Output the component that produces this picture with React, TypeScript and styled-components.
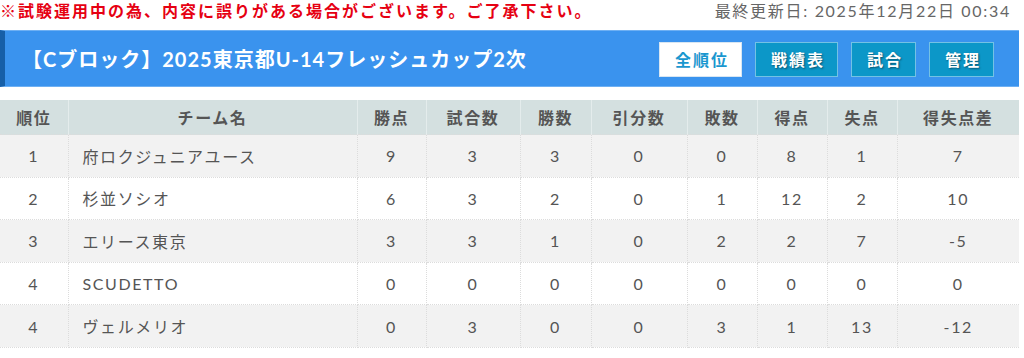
import styled, { createGlobalStyle } from "styled-components";

const GlobalStyle = createGlobalStyle`
  body {
    margin: 0;
    background: #ffffff;
    font-family: Lato, "Noto Sans CJK JP", sans-serif;
    letter-spacing: 0.1em;
  }
`;

const Page = styled.div`
  width: 1019px;
`;

const TopLine = styled.div`
  height: 30px;
  display: flex;
  justify-content: space-between;
  align-items: flex-start;
  padding-right: 8px;
`;

const Notice = styled.div`
  color: #e60012;
  font-size: 16px;
  font-weight: 700;
  line-height: 22px;
  letter-spacing: 2px;
`;

const Updated = styled.div`
  color: #666666;
  font-size: 16px;
  line-height: 22px;
  letter-spacing: 1.7px;
`;

const TitleBar = styled.div`
  height: 55px;
  background: #3a93ee;
  border-top: 1px solid #6eb0f3;
  border-bottom: 1px solid #6eb0f3;
  border-left: 5px solid #165fa8;
  display: flex;
  align-items: center;
  justify-content: space-between;
  padding: 0 25px 0 17px;
  margin-bottom: 13px;
`;

const Title = styled.h1`
  margin: 0;
  color: #ffffff;
  font-size: 20px;
  font-weight: 700;
  letter-spacing: 0.05em;
`;

const Nav = styled.div`
  display: flex;
  gap: 13px;
  padding-top: 1px;
`;

const NavButton = styled.a<{ $active?: boolean }>`
  height: 35px;
  box-sizing: border-box;
  display: flex;
  align-items: center;
  padding: 0 12px 0 15px;
  font-size: 16px;
  font-weight: 700;
  letter-spacing: 2px;
  cursor: pointer;
  border: 1px solid ${(p) => (p.$active ? "#d8e6f2" : "#73c2e4")};
  background: ${(p) => (p.$active ? "#ffffff" : "#0c97c8")};
  color: ${(p) => (p.$active ? "#1a97cf" : "#ffffff")};
  text-shadow: ${(p) => (p.$active ? "none" : "1px 1px 2px rgba(0, 0, 0, 0.45)")};
`;

const Table = styled.table`
  width: 1019px;
  border-collapse: collapse;
  table-layout: fixed;
  color: #555555;
  font-size: 16px;
`;

const HeadCell = styled.th`
  height: 34px;
  padding: 0;
  background: #d4e0e0;
  font-weight: 700;
  text-align: center;
  border-left: 1px solid #e4ecec;
  &:first-child {
    border-left: none;
  }
`;

const Row = styled.tr<{ $odd: boolean }>`
  background: ${(p) => (p.$odd ? "#f2f2f2" : "#ffffff")};
`;

const Cell = styled.td<{ $left?: boolean }>`
  height: 41.6px;
  padding: 0 ${(p) => (p.$left ? "14px" : "0")};
  text-align: ${(p) => (p.$left ? "left" : "center")};
  border: 1px dotted #dcdcdc;
  &:first-child {
    border-left: none;
  }
  &:last-child {
    border-right: none;
  }
`;

const widths = [68, 289, 69, 94, 71, 96, 70, 70, 70, 122];
const heads = ["順位", "チーム名", "勝点", "試合数", "勝数", "引分数", "敗数", "得点", "失点", "得失点差"];

const rows: (string | number)[][] = [
  [1, "府ロクジュニアユース", 9, 3, 3, 0, 0, 8, 1, 7],
  [2, "杉並ソシオ", 6, 3, 2, 0, 1, 12, 2, 10],
  [3, "エリース東京", 3, 3, 1, 0, 2, 2, 7, -5],
  [4, "SCUDETTO", 0, 0, 0, 0, 0, 0, 0, 0],
  [4, "ヴェルメリオ", 0, 3, 0, 0, 3, 1, 13, -12],
];

export default function App() {
  return (
    <Page>
      <GlobalStyle />
      <TopLine>
        <Notice>※試験運用中の為、内容に誤りがある場合がございます。ご了承下さい。</Notice>
        <Updated>最終更新日: 2025年12月22日 00:34</Updated>
      </TopLine>
      <TitleBar>
        <Title>【Cブロック】2025東京都U-14フレッシュカップ2次</Title>
        <Nav>
          <NavButton $active>全順位</NavButton>
          <NavButton>戦績表</NavButton>
          <NavButton>試合</NavButton>
          <NavButton>管理</NavButton>
        </Nav>
      </TitleBar>
      <Table>
        <colgroup>
          {widths.map((w, i) => (
            <col key={i} style={{ width: w }} />
          ))}
        </colgroup>
        <thead>
          <tr>
            {heads.map((h) => (
              <HeadCell key={h}>{h}</HeadCell>
            ))}
          </tr>
        </thead>
        <tbody>
          {rows.map((r, i) => (
            <Row key={i} $odd={i % 2 === 0}>
              {r.map((v, j) => (
                <Cell key={j} $left={j === 1}>
                  {v}
                </Cell>
              ))}
            </Row>
          ))}
        </tbody>
      </Table>
    </Page>
  );
}
